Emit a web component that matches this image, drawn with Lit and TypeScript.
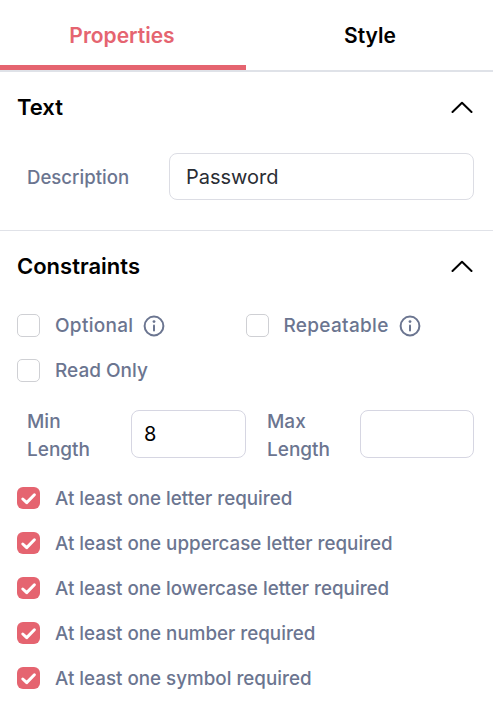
import { LitElement, html, css, svg } from "lit";
import { customElement } from "lit/decorators.js";

const chevron = html`<svg class="chev" width="22" height="12" viewBox="0 0 22 12"><path d="M1.5 11 L11 1.8 L20.5 11" fill="none" stroke="#000" stroke-width="2" stroke-linecap="round" stroke-linejoin="round"/></svg>`;
const info = html`<svg class="info" width="22" height="22" viewBox="0 0 22 22"><circle cx="11" cy="11" r="9.4" fill="none" stroke="#6b7590" stroke-width="2"/><circle cx="11" cy="6.6" r="1.4" fill="#6b7590"/><rect x="10" y="9.6" width="2" height="7" rx="1" fill="#6b7590"/></svg>`;
const check = svg`<path d="M5.8 12 L9.7 15.6 L17.4 7.8" fill="none" stroke="#fff" stroke-width="3" stroke-linecap="round" stroke-linejoin="round"/>`;

const box = (on: boolean) => on
  ? html`<span class="box on"><svg width="23" height="22" viewBox="0 0 23 22">${check}</svg></span>`
  : html`<span class="box"></span>`;

@customElement("app-root")
export class AppRoot extends LitElement {
  static styles = css`
    :host { display: block; width: 493px; height: 720px; background: #fff; font-family: "Inter", "Liberation Sans", sans-serif; overflow: hidden; }
    * { box-sizing: border-box; }
    .tabs { display: flex; height: 72px; border-bottom: 2px solid #dfe2e8; }
    .tab { width: 246px; height: 70px; display: flex; align-items: center; justify-content: center; font-size: 21px; font-weight: 600; color: #000; }
    .tab.active { color: #e56470; border-bottom: 5px solid #e56470; padding: 5px 2px 0 0; }
    .tab.second { flex: 1; padding-left: 1px; }
    .section { padding: 0 19px 0 17px; }
    .head { display: flex; align-items: center; justify-content: space-between; font-size: 22px; font-weight: 600; color: #000; }
    .chev { margin-right: 1px; }
    .text { height: 159px; border-bottom: 1px solid #e0e2e8; margin: 0; }
    .text .head { height: 70px; }
    .desc { display: flex; align-items: center; margin-top: 11px; }
    .label { color: #6b7590; font-size: 19px; font-weight: 500; }
    .desc .label { width: 152px; padding-left: 10px; font-size: 18.6px; }
    .input { border: 1px solid #dcdde4; border-radius: 8px; background: #fff; display: flex; align-items: center; font-size: 20px; color: #2a2d34; }
    .desc .input { flex: 1; height: 47px; padding: 0 0 0 16px; }
    .cons .head { height: 70px; }
    .rows { display: flex; flex-direction: column; gap: 22px; }
    .rows.top { margin-top: 13px; }
    .row { display: flex; align-items: center; height: 23px; color: #6b7590; font-size: 18.8px; font-weight: 500; }
    .rows.top .row { font-size: 19px; }
    .box { width: 23px; height: 23px; border: 1.5px solid #cfd0d4; border-radius: 5px; flex: none; margin-right: 15px; display: block; }
    .box.on { background: #e56470; border: 0; border-radius: 6px; height: 22px; align-self: flex-start; }
    .box svg { display: block; }
    .info { margin-left: 10px; }
    .opt { width: 229px; display: flex; align-items: center; letter-spacing: 0.3px; }
    .lens { display: flex; align-items: center; height: 48px; margin: 28px 0 29px; }
    .lens .label { line-height: 28px; padding: 4px 0 0 10px; }
    .lens .min { width: 114px; }
    .lens .max { width: 93px; margin-left: 21px; padding-left: 0; }
    .lens .input { height: 48px; padding-left: 12px; border-color: #d6d6e2; color: #000; }
    .lens .i1 { width: 115px; }
    .lens .i2 { flex: 1; }
  `;

  render() {
    const reqs = ["At least one letter required", "At least one uppercase letter required", "At least one lowercase letter required", "At least one number required", "At least one symbol required"];
    return html`
      <div class="tabs">
        <div class="tab active">Properties</div>
        <div class="tab second">Style</div>
      </div>
      <div class="text">
        <div class="section">
          <div class="head"><span>Text</span>${chevron}</div>
          <div class="desc"><span class="label">Description</span><div class="input">Password</div></div>
        </div>
      </div>
      <div class="section cons">
        <div class="head"><span>Constraints</span>${chevron}</div>
        <div class="rows top">
          <div class="row"><div class="opt">${box(false)}Optional${info}</div><div class="opt">${box(false)}Repeatable${info}</div></div>
          <div class="row">${box(false)}Read Only</div>
        </div>
        <div class="lens">
          <div class="label min">Min<br />Length</div>
          <div class="input i1">8</div>
          <div class="label max">Max<br />Length</div>
          <div class="input i2"></div>
        </div>
        <div class="rows">
          ${reqs.map((r) => html`<div class="row">${box(true)}${r}</div>`)}
        </div>
      </div>
    `;
  }
}
